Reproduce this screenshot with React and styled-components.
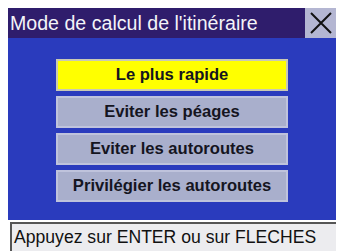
import styled, { createGlobalStyle } from "styled-components"

const Global = createGlobalStyle`
html, body {
  margin: 0;
  padding: 0;
  background: #ffffff;
}
body {
  font-family: "Liberation Sans", Arial, sans-serif;
}
`

const Screen = styled.div`
width: 339px;
height: 251px;
padding: 8px 3px 0 8px;
box-sizing: border-box;
display: flex;
flex-direction: column;
overflow: hidden;
`

const TitleBar = styled.div`
display: flex;
height: 30px;
background: #2f1d6c;
`

const Title = styled.div`
flex: 1;
color: #f4f4f8;
font-size: 19.6px;
line-height: 30px;
padding-left: 2px;
white-space: nowrap;
`

const CloseButton = styled.div`
width: 31px;
display: flex;
align-items: center;
justify-content: center;
background: #b4b6d2;
`

const Body = styled.div`
height: 182px;
background: #2a3bbd;
display: flex;
flex-direction: column;
align-items: center;
padding-top: 21px;
box-sizing: border-box;
gap: 5px;
`

const Option = styled.div`
width: 232px;
height: 32px;
box-sizing: border-box;
border: 2px solid ${p => (p.$active ? "#c9c9b4" : "#bfc3dc")};
background: ${p => (p.$active ? "#ffff00" : "#a9afcc")};
display: flex;
align-items: center;
justify-content: center;
font-weight: bold;
font-size: 16.6px;
color: #15151f;
white-space: nowrap;
`

const Status = styled.div`
margin-top: 2px;
margin-left: 2px;
flex: 1;
background: #ececef;
border-top: 2px solid #555555;
border-left: 2px solid #555555;
font-size: 17.6px;
line-height: 26px;
padding-left: 2px;
color: #111111;
white-space: nowrap;
`

const options = [
    "Le plus rapide",
    "Eviter les péages",
    "Eviter les autoroutes",
    "Privilégier les autoroutes",
]

function App() {
    return (
        <>
            <Global />
            <Screen>
                <TitleBar>
                    <Title>Mode de calcul de l'itinéraire</Title>
                    <CloseButton>
                        <svg width="24" height="22" viewBox="0 0 24 22">
                            <path d="M2 1 L22 21 M22 1 L2 21" stroke="#111" strokeWidth="2" fill="none" />
                        </svg>
                    </CloseButton>
                </TitleBar>
                <Body>
                    {options.map((o, i) => (
                        <Option key={o} $active={i === 0}>{o}</Option>
                    ))}
                </Body>
                <Status>Appuyez sur ENTER ou sur FLECHES</Status>
            </Screen>
        </>
    )
}

export default App
